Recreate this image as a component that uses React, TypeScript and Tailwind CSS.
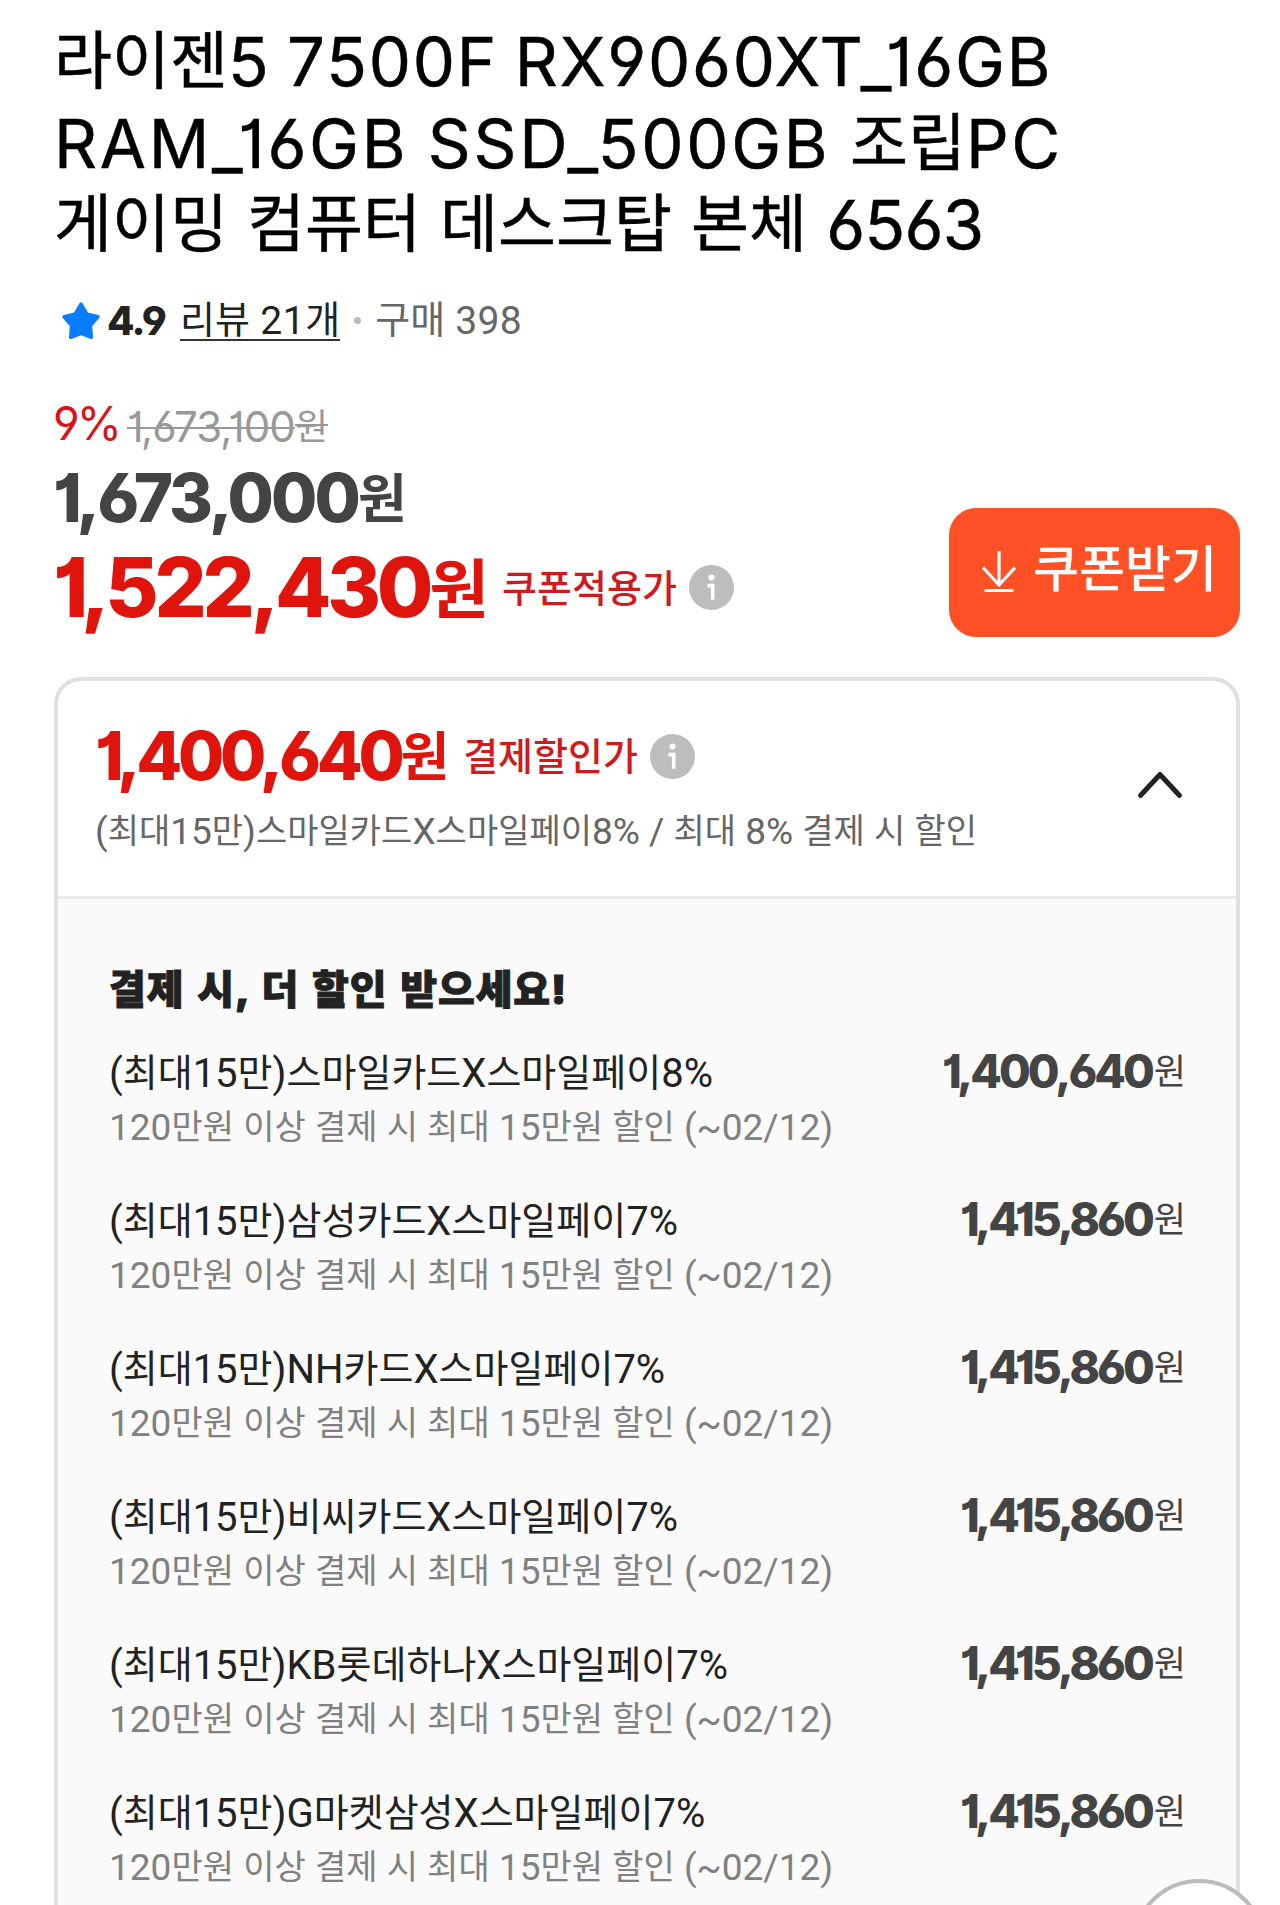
const offers = [
  { id: 1, title: '(최대15만)스마일카드X스마일페이8%', price: '1,400,640' },
  { id: 2, title: '(최대15만)삼성카드X스마일페이7%', price: '1,415,860' },
  { id: 3, title: '(최대15만)NH카드X스마일페이7%', price: '1,415,860' },
  { id: 4, title: '(최대15만)비씨카드X스마일페이7%', price: '1,415,860' },
  { id: 5, title: '(최대15만)KB롯데하나X스마일페이7%', price: '1,415,860' },
  { id: 6, title: '(최대15만)G마켓삼성X스마일페이7%', price: '1,415,860' },
];

// Hangul runs get their own font and size, everything else inherits
function Mixed({ text, ko }: { text: string; ko: string }) {
  return (
    <>
      {text.split(/([가-힣]+)/).map((part, idx) =>
        idx % 2 === 1 ? (
          <span key={idx} className={`font-['Noto_Sans_CJK_KR',sans-serif] leading-[0] tracking-normal ${ko}`}>{part}</span>
        ) : (
          part
        )
      )}
    </>
  );
}

function InfoIcon() {
  return (
    <svg viewBox="0 0 45 45" className="w-[45px] h-[45px] ml-3">
      <circle cx="22.5" cy="22.5" r="22.5" fill="#bdbdbd" />
      <circle cx="22.5" cy="12.6" r="3" fill="#fff" />
      <path d="M18.5 20.6h5.2v14.2" fill="none" stroke="#fff" strokeWidth="3.6" />
    </svg>
  );
}

export default function App() {
  return (
    <div className="w-[1280px] h-[1905px] bg-white overflow-hidden relative font-['Inter','Noto_Sans_CJK_KR',sans-serif] [font-feature-settings:'cv01','cv03','cv04'] text-black whitespace-nowrap">
      <div className="px-[54px] pt-[21px]">
        {/* Title */}
        <h1 className="text-[67px] leading-[81.5px] [-webkit-text-stroke:0.5px_#000]">
          <div className="tracking-[1.8px] [word-spacing:-4px]"><Mixed text="라이젠5 7500F RX9060XT_16GB" ko="text-[63px] align-[3px]" /></div>
          <div className="tracking-[2.7px] [word-spacing:-2px]"><Mixed text="RAM_16GB SSD_500GB 조립PC" ko="text-[63px] align-[3px]" /></div>
          <div className="tracking-[-0.7px] [word-spacing:1px]"><Mixed text="게이밍 컴퓨터 데스크탑 본체 6563" ko="text-[63px] align-[3px]" /></div>
        </h1>

        {/* Rating */}
        <div className="mt-[30px] h-[50px] flex items-center pl-[6px] font-['Roboto','Noto_Sans_CJK_KR',sans-serif] text-[39px] leading-[50px]">
          <svg viewBox="0 0 24 24" className="w-[42px] h-[42px]">
            <path d="M12 2.4L15.4 8.1L21.7 9.6L17.4 14.5L17.9 21.3L12 19L6.1 21.3L6.6 14.5L2.3 9.6L8.6 8.1z" fill="#0a7cff" stroke="#0a7cff" strokeWidth="2" strokeLinejoin="round" />
          </svg>
          <span className="ml-[5px] font-['Inter',sans-serif] font-extrabold text-[40px] tracking-[-1.8px] text-[#222]">4.9</span>
          <span className="ml-[15px] h-[40px] leading-[40px] tracking-[0.6px] text-[#222] border-b-2 border-[#333]"><Mixed text="리뷰 21개" ko="text-[38px] align-[1px]" /></span>
          <span className="mx-[14px] w-[7px] h-[7px] rounded-full bg-[#bbb]" />
          <span className="text-[#666] tracking-[0.4px]"><Mixed text="구매 398" ko="text-[38px] align-[1px]" /></span>
        </div>
      </div>

      {/* Prices */}
      <div className="mt-[50px] pl-[53px] pr-[40px] flex justify-between">
        <div>
          <div className="h-[62px] leading-[61px]">
            <span className="align-[2px] leading-none text-[46px] tracking-[-3px] text-[#d9141a]">9%</span>
            <span className="ml-[8px] text-[42px] tracking-[-0.9px] text-[#999] line-through decoration-2"><Mixed text="1,673,100원" ko="text-[36px] align-[2px]" /></span>
          </div>
          <div className="h-[80px] leading-[80px] text-[67px] font-extrabold tracking-[-2.9px] text-[#444]">
            <Mixed text="1,673,000원" ko="text-[53px] align-[4px] font-bold" />
          </div>
          <div className="h-[100px] leading-[96px] flex items-center text-[82px] font-extrabold tracking-[-4.3px] text-[#df150d]">
            <span><Mixed text="1,522,430원" ko="text-[65px] align-[4px] font-bold" /></span>
            <span className="ml-[13px] text-[38px] font-medium tracking-normal text-[#cf1a1e]">쿠폰적용가</span>
            <InfoIcon />
          </div>
        </div>
        <button className="mt-[112px] w-[291px] h-[129px] pl-[33px] rounded-[27px] bg-[#ff5026] text-white flex items-center gap-[17px]">
          <svg viewBox="0 0 34 42" className="w-[34px] h-[42px]" fill="none" stroke="#fff" strokeWidth="3.2">
            <path d="M17 0v34M1 16.5l16 17.5 16-17.5M2.5 39.5h29" />
          </svg>
          <span className="pb-[6px] text-[50px] font-medium">쿠폰받기</span>
        </button>
      </div>

      {/* Payment discount card */}
      <div className="mt-[39px] ml-[54px] w-[1186px] h-[1300px] border-4 border-[#e0e0e0] rounded-[27px] overflow-hidden">
        <div className="h-[218px] border-b-[3px] border-[#e9e9e9] pt-[4px] pl-[37px] pr-[52px] flex items-center justify-between">
          <div>
            <div className="flex items-center h-[76px] text-[67px] font-extrabold tracking-[-4.4px] text-[#df150d]">
              <span><Mixed text="1,400,640원" ko="text-[53px] align-[4px] font-bold" /></span>
              <span className="ml-3.5 text-[38px] font-medium tracking-normal text-[#cf1a1e]">결제할인가</span>
              <InfoIcon />
            </div>
            <div className="mt-[7px] h-[60px] leading-[60px] font-['Roboto',sans-serif] text-[37px] text-[#666]">
              <Mixed text="(최대15만)스마일카드X스마일페이8% / 최대 8% 결제 시 할인" ko="text-[34px] align-[1px]" />
            </div>
          </div>
          <svg viewBox="0 0 48 30" className="w-[48px] h-[30px] mb-[10px]" fill="none" stroke="#222" strokeWidth="5" strokeLinecap="round" strokeLinejoin="round">
            <path d="M4.5 25.5L24 4.5l19.5 21" />
          </svg>
        </div>

        <div className="h-full bg-[#fafafa] pt-[63px] pl-[51px] pr-[50px]">
          <h2 className="text-[40px] leading-[56px] tracking-[0.9px] [word-spacing:4px] [-webkit-text-stroke:1px_#222] font-black text-[#222]">결제 시, 더 할인 받으세요!</h2>
          <ul className="mt-7">
            {offers.map((offer) => (
              <li key={offer.id} className="h-[148.1px] flex justify-between font-['Roboto',sans-serif]">
                <div>
                  <div className="h-[55px] leading-[56px] text-[40px] text-[#222]">
                    <Mixed text={offer.title} ko="text-[38px] align-[1px]" />
                  </div>
                  <div className="h-[54px] leading-[54px] text-[37px] text-[#808080]">
                    <Mixed text="120만원 이상 결제 시 최대 15만원 할인 (~02/12)" ko="text-[34px] align-[1px]" />
                  </div>
                </div>
                <div className="-mt-[3px] h-[56px] leading-[56px] font-['Inter',sans-serif] text-[46px] font-extrabold tracking-[-3px] text-[#444]">
                  <Mixed text={`${offer.price}원`} ko="ml-[2px] text-[35px] align-[4px] font-normal" />
                </div>
              </li>
            ))}
          </ul>
        </div>
      </div>

      {/* Floating button */}
      <div className="absolute left-[1132px] top-[1879px] w-[134px] h-[134px] rounded-full bg-white border-4 border-[#bbb]" />
    </div>
  );
}
